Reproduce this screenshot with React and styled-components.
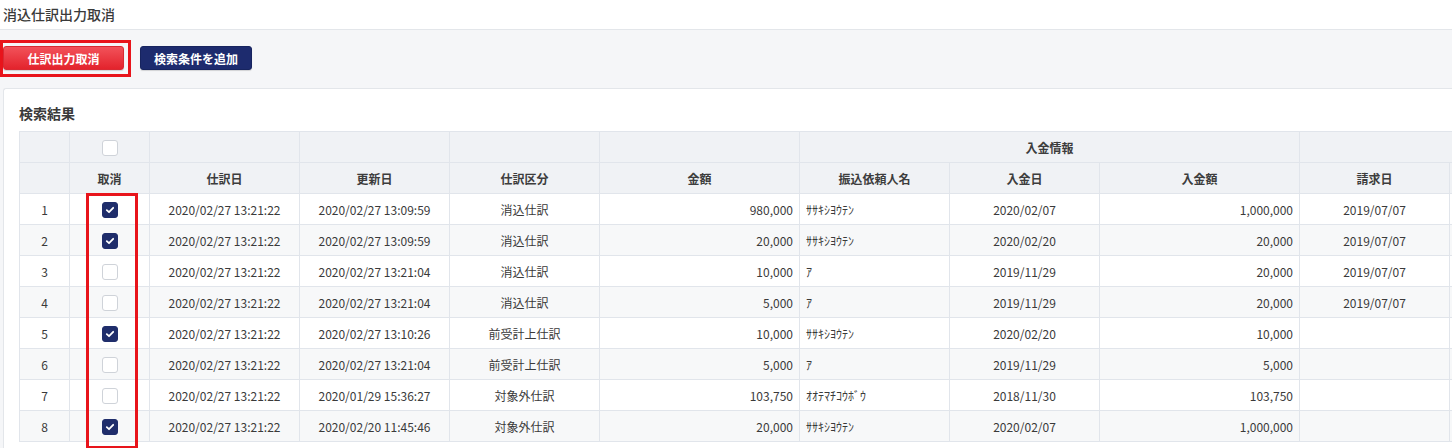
import React from 'react'
import styled, { createGlobalStyle } from 'styled-components'

const GlobalStyle = createGlobalStyle`
  html, body {
    margin: 0;
    padding: 0;
    background: #f5f6f8;
    overflow: hidden;
    font-family: "Noto Sans CJK JP", "Noto Sans", sans-serif;
    color: #333;
  }
`

const rows = [
  { no: 1, on: true, date: '2020/02/27 13:21:22', upd: '2020/02/27 13:09:59', kind: '消込仕訳', amt: '980,000', name: 'ｻｻｷｼﾖｳﾃﾝ', inDate: '2020/02/07', inAmt: '1,000,000', bill: '2019/07/07' },
  { no: 2, on: true, date: '2020/02/27 13:21:22', upd: '2020/02/27 13:09:59', kind: '消込仕訳', amt: '20,000', name: 'ｻｻｷｼﾖｳﾃﾝ', inDate: '2020/02/20', inAmt: '20,000', bill: '2019/07/07' },
  { no: 3, on: false, date: '2020/02/27 13:21:22', upd: '2020/02/27 13:21:04', kind: '消込仕訳', amt: '10,000', name: 'ｱ', inDate: '2019/11/29', inAmt: '20,000', bill: '2019/07/07' },
  { no: 4, on: false, date: '2020/02/27 13:21:22', upd: '2020/02/27 13:21:04', kind: '消込仕訳', amt: '5,000', name: 'ｱ', inDate: '2019/11/29', inAmt: '20,000', bill: '2019/07/07' },
  { no: 5, on: true, date: '2020/02/27 13:21:22', upd: '2020/02/27 13:10:26', kind: '前受計上仕訳', amt: '10,000', name: 'ｻｻｷｼﾖｳﾃﾝ', inDate: '2020/02/20', inAmt: '10,000', bill: '' },
  { no: 6, on: false, date: '2020/02/27 13:21:22', upd: '2020/02/27 13:21:04', kind: '前受計上仕訳', amt: '5,000', name: 'ｱ', inDate: '2019/11/29', inAmt: '5,000', bill: '' },
  { no: 7, on: false, date: '2020/02/27 13:21:22', upd: '2020/01/29 15:36:27', kind: '対象外仕訳', amt: '103,750', name: 'ｵｵﾃﾏﾁｺｳﾎﾞｳ', inDate: '2018/11/30', inAmt: '103,750', bill: '' },
  { no: 8, on: true, date: '2020/02/27 13:21:22', upd: '2020/02/20 11:45:46', kind: '対象外仕訳', amt: '20,000', name: 'ｻｻｷｼﾖｳﾃﾝ', inDate: '2020/02/07', inAmt: '1,000,000', bill: '' },
]

const widths = [50, 80, 150, 150, 150, 200, 150, 150, 200, 150, 150]
const tableWidth = widths.reduce((a, b) => a + b, 0) + 1

const TitleBar = styled.div`
  box-sizing: border-box;
  height: 30px;
  background: #fff;
  border-bottom: 1px solid #e3e6ea;
  padding: 0 0 2px 3px;
  display: flex;
  align-items: center;
  font-size: 14px;
  font-weight: 500;
  color: #3a3a3a;
`

const Main = styled.div`
  padding: 16px 0 0 3px;
`

const Toolbar = styled.div`
  display: flex;
  gap: 16px;
  position: relative;
`

const Button = styled.button`
  height: 24px;
  border-radius: 3px;
  border: 1px solid ${p => (p.$danger ? '#d92a33' : '#17245f')};
  background: ${p => (p.$danger ? 'linear-gradient(#f2525a, #e3232c)' : '#1d2b6e')};
  color: #fff;
  font-family: inherit;
  font-size: 12px;
  font-weight: 700;
  padding: 0;
  width: ${p => p.$w}px;
  box-shadow: 0 1px 1px rgba(0, 0, 0, 0.15);
`

const Mark = styled.div`
  position: absolute;
  border: 3px solid #e8141b;
  pointer-events: none;
`

const Card = styled.div`
  margin-top: 18px;
  background: #fff;
  border: 1px solid #e3e6ea;
  border-right: none;
  border-radius: 3px 0 0 0;
  padding: 15px 0 0 15px;
  height: 400px;
  overflow: hidden;
  position: relative;
`

const Heading = styled.div`
  font-size: 14px;
  font-weight: 700;
  color: #3a3a3a;
  height: 18px;
  line-height: 18px;
  margin-bottom: 9px;
`

const Table = styled.table`
  border-collapse: collapse;
  table-layout: fixed;
  width: ${p => p.$w}px;
  font-size: 12px;
`

const Th = styled.th`
  height: 30px;
  padding: 0;
  background: #f0f2f5;
  font-weight: 700;
  color: #3d3d3d;
  text-align: center;
  border: 1px solid #e1e5eb;
`

const Td = styled.td`
  height: 30px;
  padding: ${p => (p.$align === 'right' ? '0 6px 0 0' : p.$align === 'left' ? '0 0 0 6px' : '0')};
  text-align: ${p => p.$align || 'center'};
  border: 1px solid #e1e5eb;
  white-space: nowrap;
  color: #3a3a3a;
`

const Tr = styled.tr`
  background: ${p => (p.$even ? '#f7f8f9' : '#fff')};
`

const Box = styled.span`
  display: inline-flex;
  align-items: center;
  justify-content: center;
  width: 16px;
  height: 16px;
  box-sizing: border-box;
  border-radius: 3px;
  vertical-align: middle;
  background: ${p => (p.$on ? '#1f2d6b' : '#fff')};
  border: 1px solid ${p => (p.$on ? '#1f2d6b' : '#cfd3d9')};
`

function Check({ on }) {
  return (
    <Box $on={on}>
      {on && (
        <svg width="10" height="10" viewBox="0 0 10 10">
          <path d="M1.8 5.2 L4 7.2 L8.2 2.8" fill="none" stroke="#fff" strokeWidth="1.8" strokeLinecap="round" strokeLinejoin="round" />
        </svg>
      )}
    </Box>
  )
}

export default function App() {
  return (
    <>
      <GlobalStyle />
      <TitleBar>消込仕訳出力取消</TitleBar>
      <Main>
        <Toolbar>
          <Button $danger $w={121}>仕訳出力取消</Button>
          <Button $w={112}>検索条件を追加</Button>
          <Mark style={{ left: -3, top: -6, width: 125, height: 31 }} />
        </Toolbar>
        <Card>
          <Heading>検索結果</Heading>
          <Table $w={tableWidth}>
            <colgroup>
              {widths.map((w, i) => <col key={i} style={{ width: w }} />)}
            </colgroup>
            <thead>
              <tr>
                <Th />
                <Th><Check on={false} /></Th>
                <Th />
                <Th />
                <Th />
                <Th />
                <Th colSpan={3}>入金情報</Th>
                <Th colSpan={2} />
              </tr>
              <tr>
                <Th />
                <Th>取消</Th>
                <Th>仕訳日</Th>
                <Th>更新日</Th>
                <Th>仕訳区分</Th>
                <Th>金額</Th>
                <Th>振込依頼人名</Th>
                <Th>入金日</Th>
                <Th>入金額</Th>
                <Th>請求日</Th>
                <Th />
              </tr>
            </thead>
            <tbody>
              {rows.map((r, i) => (
                <Tr key={r.no} $even={i % 2 === 1}>
                  <Td>{r.no}</Td>
                  <Td><Check on={r.on} /></Td>
                  <Td>{r.date}</Td>
                  <Td>{r.upd}</Td>
                  <Td>{r.kind}</Td>
                  <Td $align="right">{r.amt}</Td>
                  <Td $align="left">{r.name}</Td>
                  <Td>{r.inDate}</Td>
                  <Td $align="right">{r.inAmt}</Td>
                  <Td>{r.bill}</Td>
                  <Td />
                </Tr>
              ))}
            </tbody>
          </Table>
          <Mark style={{ left: 82, top: 104, width: 46, height: 250 }} />
        </Card>
      </Main>
    </>
  )
}
